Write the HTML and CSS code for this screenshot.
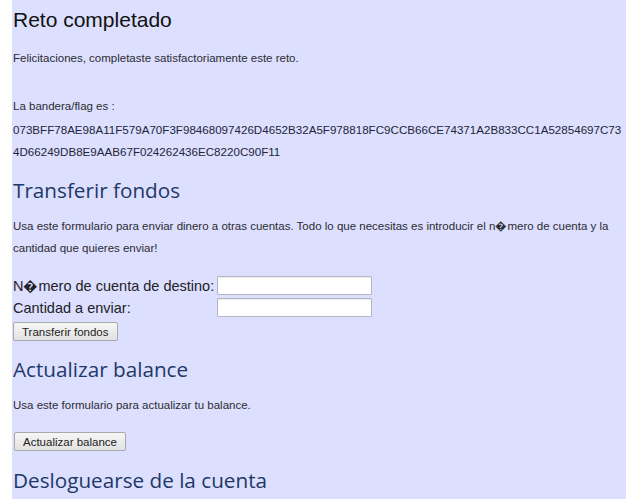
FILE: index.html
```html
<!DOCTYPE html>
<html lang="es">
<head>
<meta charset="utf-8">
<title>Reto completado</title>
<link rel="stylesheet" href="styles.css">
</head>
<body>
<div class="panel">
  <h1 class="title">Reto completado</h1>
  <p class="text first">Felicitaciones, completaste satisfactoriamente este reto.</p>
  <p class="text flag-label">La bandera/flag es :</p>
  <p class="flag">073BFF78AE98A11F579A70F3F98468097426D4652B32A5F978818FC9CCB66CE74371A2B833CC1A52854697C73<br>4D66249DB8E9AAB67F024262436EC8220C90F11</p>

  <h2 class="section">Transferir fondos</h2>
  <p class="text intro">Usa este formulario para enviar dinero a otras cuentas. Todo lo que necesitas es introducir el n�mero de cuenta y la cantidad que quieres enviar!</p>
  <form class="transfer">
    <div class="grid">
      <label class="lbl" for="acc">N�mero de cuenta de destino:</label>
      <input class="field" id="acc" type="text">
      <label class="lbl" for="amt">Cantidad a enviar:</label>
      <input class="field" id="amt" type="text">
    </div>
    <button class="btn" type="button">Transferir fondos</button>
  </form>

  <h2 class="section">Actualizar balance</h2>
  <p class="text intro">Usa este formulario para actualizar tu balance.</p>
  <button class="btn btn2" type="button">Actualizar balance</button>

  <h2 class="section">Desloguearse de la cuenta</h2>
</div>
</body>
</html>
```

FILE: styles.css
```css
html, body {
  margin: 0;
  padding: 0;
  background: #ffffff;
  height: 100%;
}

.panel {
  margin-left: 12px;
  width: 614px;
  min-height: 100%;
  background: #dcdffd;
  padding: 8px 0 0 1px;
  box-sizing: border-box;
  font-family: "Liberation Sans", Arial, sans-serif;
  color: #2a2a33;
  overflow: hidden;
}

.title {
  margin: 0;
  font-size: 21px;
  font-weight: normal;
  line-height: 24px;
  color: #111111;
}

.text {
  margin: 0;
  font-size: 11.5px;
  line-height: 22px;
  color: #2c2c34;
}

.first {
  margin-top: 15px;
}

.flag-label {
  margin-top: 26px;
}

.flag {
  margin: 2px 0 0 0;
  font-size: 11.6px;
  line-height: 22px;
  color: #22253a;
  white-space: nowrap;
}

.section {
  margin: 14px 0 0 0;
  font-family: "Open Sans", "DejaVu Sans", sans-serif;
  font-size: 20.7px;
  font-weight: normal;
  line-height: 26px;
  color: #1e3868;
}

.intro {
  margin-top: 12px;
  padding-right: 4px;
}

.transfer {
  margin: 17px 0 0 0;
}

.grid {
  display: grid;
  grid-template-columns: 204px 155px;
  row-gap: 3px;
  align-items: center;
}

.lbl {
  font-size: 14.5px;
  line-height: 16px;
  color: #222228;
  white-space: nowrap;
}

.field {
  width: 155px;
  height: 19px;
  box-sizing: border-box;
  margin: 0;
  border: 1px solid #b4b6c4;
  border-radius: 1px;
  background: #ffffff;
  box-shadow: inset 0 1px 1px rgba(0, 0, 0, 0.08);
}

.btn {
  display: block;
  margin-top: 5px;
  height: 19px;
  padding: 0 8px;
  font-family: "Liberation Sans", Arial, sans-serif;
  font-size: 11.5px;
  color: #222222;
  border: 1px solid #a9a9a9;
  border-radius: 2px;
  background: linear-gradient(#f6f6f6, #e2e2e2);
}

.btn2 {
  margin-top: 16px;
  margin-left: 1px;
}

.transfer + .section {
  margin-top: 15px;
}

.btn2 + .section {
  margin-top: 16px;
}
```
